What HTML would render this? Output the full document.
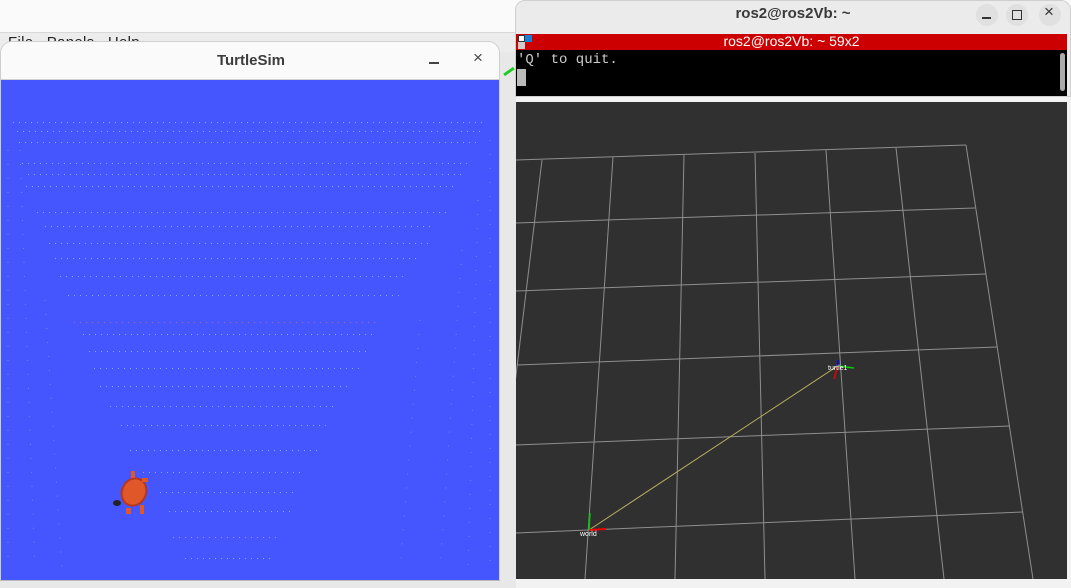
<!DOCTYPE html>
<html><head><meta charset="utf-8"><style>
*{margin:0;padding:0;box-sizing:border-box}
body{width:1071px;height:588px;overflow:hidden;background:#f2f2f2;font-family:"Liberation Sans","DejaVu Sans",sans-serif;position:relative}
.abs{position:absolute}
</style></head><body>
<div class="abs" style="left:0;top:0;width:1071px;height:32px;background:#fafafa"></div>
<div class="abs" style="left:0;top:32px;width:515px;height:20px;background:#ececec;border-top:1px solid #d8d8d8"></div>
<div class="abs" style="left:8px;top:34px;font-size:15px;color:#222;letter-spacing:0.3px">File&nbsp;&nbsp;&nbsp;Panels&nbsp;&nbsp;&nbsp;Help</div>
<div class="abs" style="left:500px;top:52px;width:16px;height:536px;background:#e8e8e8"></div>
<div class="abs" style="left:503px;top:70px;width:12px;height:3px;background:#2c2;transform:rotate(-35deg)"></div>

<!-- TurtleSim window -->
<div class="abs" style="left:0;top:41px;width:500px;height:540px;background:#fafafa;border-radius:12px 12px 0 0;border:1px solid #cfcfcf;overflow:hidden">
  <div class="abs" style="left:0;top:0;width:500px;height:38px;border-bottom:1px solid #d0d0d0;background:#fafafa"></div>
  <div class="abs" style="left:0;top:10px;width:500px;text-align:center;font-size:15px;font-weight:bold;color:#3d3d3d">TurtleSim</div>
  <div class="abs" style="left:428px;top:20px;width:10px;height:1.5px;background:#444"></div>
  <div class="abs" style="left:472px;top:6px;font-size:17px;color:#444">×</div>
  <div class="abs" style="left:0;top:38px;width:500px;height:502px;background:#4556ff"></div>
</div>
<svg class="abs" style="left:0;top:0" width="500" height="580">
<g stroke-width="1" stroke-dasharray="1 5" fill="none" opacity="0.75">
<g stroke="#b0c4c0">
<line x1="13" y1="122.5" x2="484" y2="122.5"/>
<line x1="17" y1="131.5" x2="485" y2="131.5"/>
<line x1="19" y1="142.5" x2="476" y2="142.5"/>
<line x1="22" y1="163.5" x2="472" y2="163.5"/>
<line x1="28" y1="174.5" x2="463" y2="174.5"/>
<line x1="26" y1="186.5" x2="457" y2="186.5"/>
<line x1="37" y1="212.5" x2="448" y2="212.5"/>
<line x1="45" y1="226.5" x2="435" y2="226.5"/>
<line x1="49" y1="243.5" x2="430" y2="243.5"/>
<line x1="55" y1="258.5" x2="416" y2="258.5"/>
<line x1="60" y1="276.5" x2="404" y2="276.5"/>
<line x1="68" y1="295.5" x2="401" y2="295.5"/>
<line x1="83" y1="334.5" x2="373" y2="334.5"/>
<line x1="89" y1="351.5" x2="370" y2="351.5"/>
<line x1="94" y1="368.5" x2="360" y2="368.5"/>
<line x1="100" y1="386.5" x2="350" y2="386.5"/>
<line x1="110" y1="406.5" x2="338" y2="406.5"/>
<line x1="121" y1="425.5" x2="331" y2="425.5"/>
<line x1="130" y1="450.5" x2="320" y2="450.5"/>
<line x1="143" y1="472.5" x2="303" y2="472.5"/>
<line x1="160" y1="492.5" x2="293" y2="492.5"/>
<line x1="169" y1="511.5" x2="290" y2="511.5"/>
<line x1="185" y1="558.5" x2="275" y2="558.5"/>
</g>
<line x1="74" y1="322.5" x2="378" y2="322.5" stroke="#e06a8a"/>
<line x1="173" y1="537.5" x2="280" y2="537.5" stroke="#c8a0c8"/>
</g>
<g stroke="#b0c4c0" stroke-width="1" stroke-dasharray="1 13" fill="none" opacity="0.45">
<line x1="8" y1="150" x2="8" y2="570"/>
<line x1="20" y1="150" x2="35" y2="570"/>
<line x1="490" y1="140" x2="490" y2="570"/>
<line x1="478" y1="200" x2="468" y2="570"/>
<line x1="462" y1="250" x2="440" y2="570"/>
<line x1="45" y1="300" x2="62" y2="570"/>
<line x1="420" y1="320" x2="400" y2="570"/>
</g>
</svg>
<!-- turtle -->
<div class="abs" style="left:121px;top:477px;width:26px;height:30px;border-radius:50%;background:#e0582a;border:2px solid #b8361a;transform:rotate(25deg)"></div>
<div class="abs" style="left:113px;top:500px;width:8px;height:6px;border-radius:50%;background:#222"></div>
<div class="abs" style="left:131px;top:471px;width:4px;height:7px;background:#e0582a"></div>
<div class="abs" style="left:142px;top:478px;width:6px;height:4px;background:#e0582a"></div>
<div class="abs" style="left:126px;top:508px;width:5px;height:6px;background:#e0582a"></div>
<div class="abs" style="left:140px;top:505px;width:4px;height:9px;background:#e0582a"></div>

<!-- bottom tabs -->
<div class="abs" style="left:0;top:580px;width:500px;height:8px;background:#e8e8e8;border-top:1px solid #bbb"></div>

<!-- terminal -->
<div class="abs" style="left:515px;top:0;width:556px;height:97px;background:#ebebeb;border-radius:10px 10px 0 0;border:1px solid #cfcfcf"></div>
<div class="abs" style="left:515px;top:5px;width:556px;text-align:center;font-size:15px;font-weight:bold;color:#3a3a3a">ros2@ros2Vb: ~</div>
<div class="abs" style="left:976px;top:4px;width:22px;height:22px;border-radius:50%;background:#e0e0e0"></div>
<div class="abs" style="left:982px;top:17px;width:9px;height:1.5px;background:#333"></div>
<div class="abs" style="left:1006px;top:4px;width:22px;height:22px;border-radius:50%;background:#e0e0e0"></div>
<div class="abs" style="left:1012px;top:10px;width:10px;height:10px;border:1.5px solid #333"></div>
<div class="abs" style="left:1039px;top:4px;width:22px;height:22px;border-radius:50%;background:#e0e0e0"></div>
<div class="abs" style="left:1044px;top:2px;font-size:17px;color:#333">×</div>
<div class="abs" style="left:516px;top:34px;width:551px;height:16px;background:#cc0000"></div>
<div class="abs" style="left:518px;top:35px;width:7px;height:7px;background:#fff;border:1px solid #333"></div><div class="abs" style="left:525px;top:35px;width:7px;height:7px;background:#1a7fd4"></div><div class="abs" style="left:518px;top:42px;width:7px;height:7px;background:#ccc"></div>
<div class="abs" style="left:516px;top:33px;width:551px;text-align:center;font-size:14px;color:#fff">ros2@ros2Vb: ~ 59x2</div>
<div class="abs" style="left:516px;top:50px;width:551px;height:46px;background:#000"></div>
<div class="abs" style="left:517px;top:52px;font-family:'Liberation Mono',monospace;font-size:14px;color:#ccc">'Q' to quit.</div>
<div class="abs" style="left:517px;top:69px;width:9px;height:17px;background:#bbb"></div>
<div class="abs" style="left:1060px;top:53px;width:5px;height:38px;border-radius:3px;background:#aaa"></div>

<!-- rviz -->
<div class="abs" style="left:516px;top:102px;width:551px;height:477px;background:#303030"></div>
<svg class="abs" style="left:0;top:0" width="1071" height="588">
<defs><clipPath id="c"><rect x="516" y="102" width="551" height="477"/></clipPath></defs>
<g clip-path="url(#c)" stroke="#8e8e8e" stroke-width="1" fill="none">
<line x1="515" y1="160" x2="966" y2="145"/>
<line x1="515" y1="223" x2="975" y2="208"/>
<line x1="515" y1="291" x2="986" y2="274"/>
<line x1="517" y1="365" x2="997" y2="347"/>
<line x1="515" y1="445" x2="1010" y2="426"/>
<line x1="515" y1="533" x2="1023" y2="512"/>
<line x1="542" y1="160" x2="513" y2="400"/>
<line x1="613" y1="157" x2="585" y2="579"/>
<line x1="684" y1="155" x2="675" y2="579"/>
<line x1="755" y1="153" x2="765" y2="579"/>
<line x1="826" y1="150" x2="855" y2="579"/>
<line x1="896" y1="148" x2="944" y2="579"/>
<line x1="966" y1="145" x2="1033" y2="579"/>
<line x1="589" y1="530" x2="836" y2="367" stroke="#b8b060"/>
<line x1="589" y1="530" x2="606" y2="529" stroke="#e00" stroke-width="2"/>
<line x1="589" y1="530" x2="590" y2="513" stroke="#0c0" stroke-width="1.5"/>
<line x1="838" y1="366" x2="854" y2="368" stroke="#0c0" stroke-width="1.5"/>
<line x1="838" y1="366" x2="834" y2="379" stroke="#e00" stroke-width="1.5"/>
<line x1="838" y1="366" x2="838" y2="360" stroke="#00f" stroke-width="1.5"/>
</g>
<text x="580" y="536" font-size="7" fill="#fff" font-family="Liberation Sans">world</text>
<text x="828" y="370" font-size="7" fill="#fff" font-family="Liberation Sans">turtle1</text>
</svg>
</body></html>
